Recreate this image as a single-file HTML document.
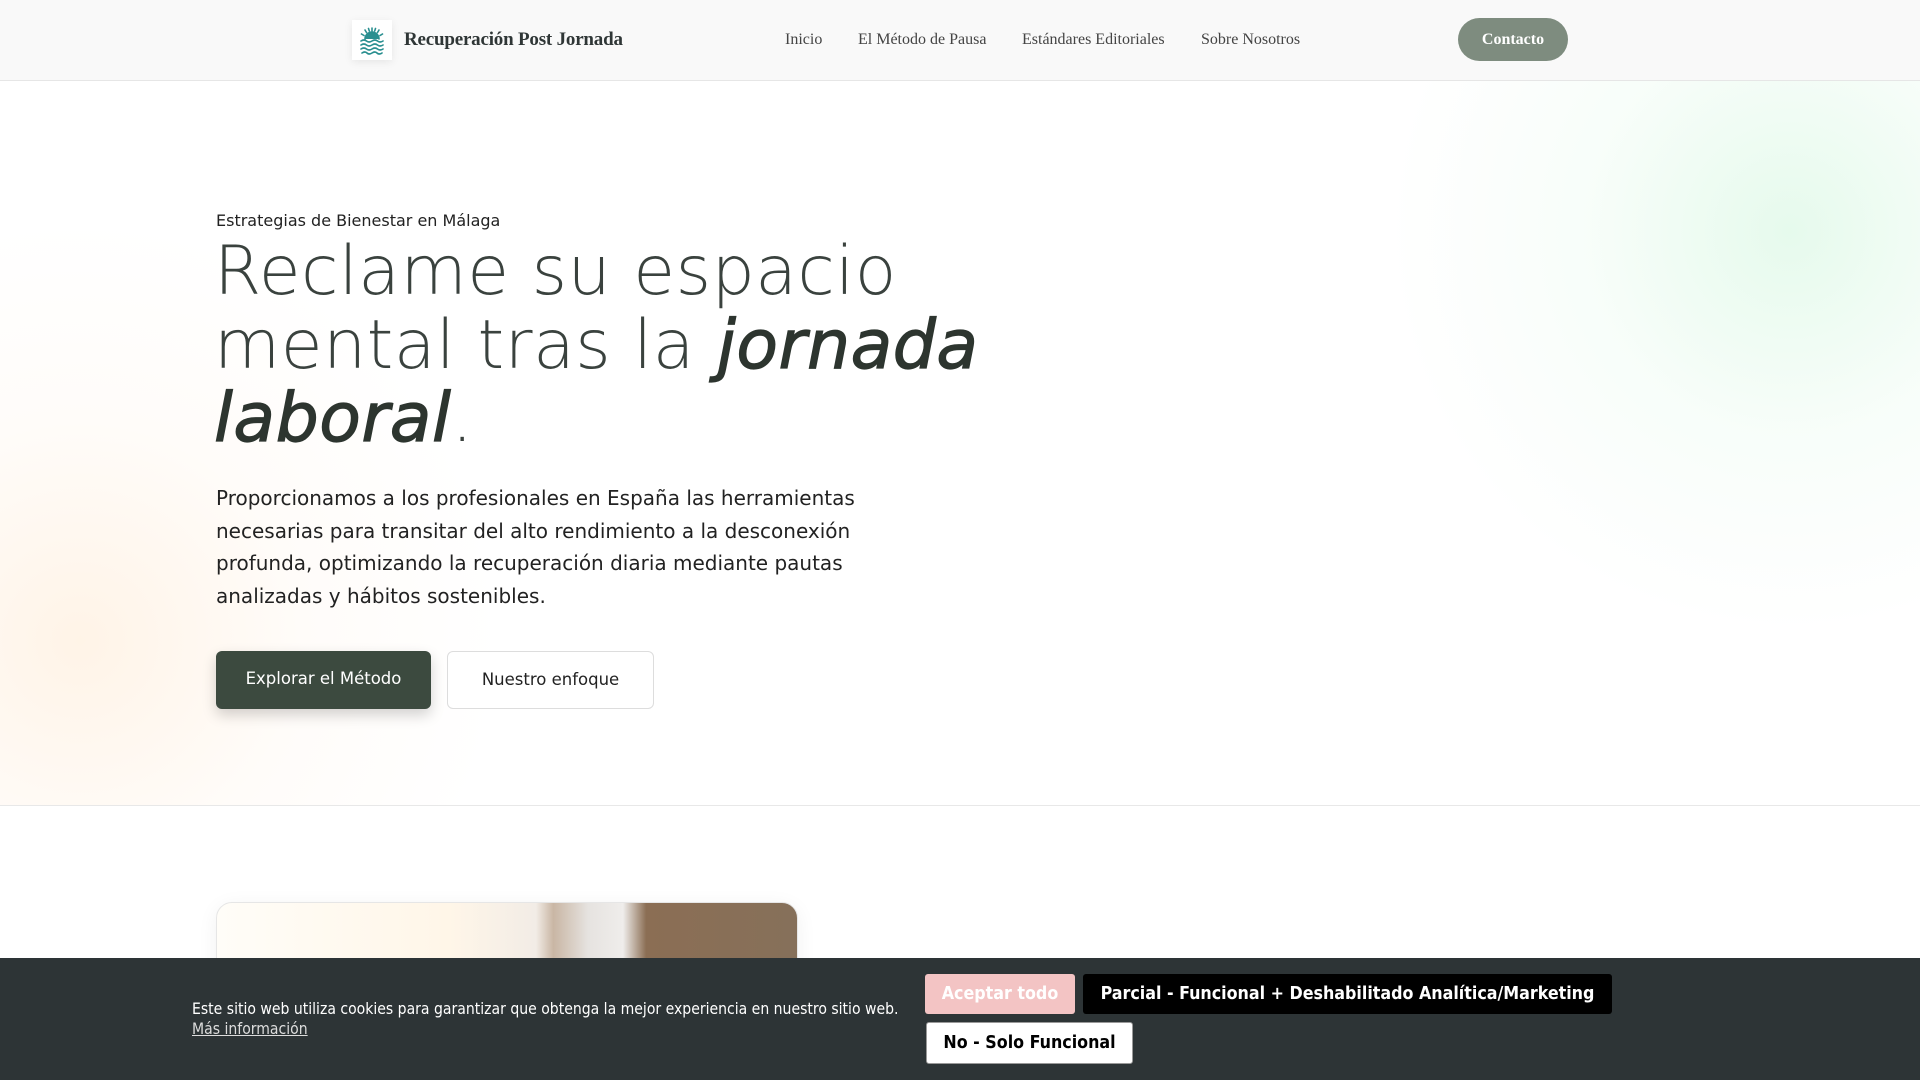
<!DOCTYPE html>
<html><head><meta charset="utf-8"><style>
*{box-sizing:border-box;margin:0;padding:0}
body{width:1920px;height:1080px;overflow:hidden;background:#fff;font-family:"DejaVu Sans","Liberation Sans",sans-serif;position:relative}
header{position:absolute;left:0;top:0;width:1920px;height:81px;background:#f9f9f9;border-bottom:1px solid #e6e6e6;z-index:3}
.logo{position:absolute;left:352px;top:20px;width:40px;height:40px;background:#fff;box-shadow:0 2px 8px rgba(0,0,0,.08)}
.brand{position:absolute;left:404px;top:29px;font:bold 19px "Liberation Serif",serif;color:#2f3636;letter-spacing:-.2px}
nav a{position:absolute;top:31px;font:16px "Liberation Serif",serif;color:#444;text-decoration:none}
.cta{position:absolute;left:1458px;top:18px;width:110px;height:43px;border-radius:22px;background:#7e8c7f;color:#fff;font:bold 16px "Liberation Serif",serif;text-align:center;line-height:43px}
.hero{position:absolute;top:81px;left:0;width:1920px;height:725px;border-bottom:1px solid #e8e8e8;overflow:hidden;
background:radial-gradient(circle at 1790px 150px,rgba(205,245,218,.5),rgba(230,250,236,.3) 200px,rgba(255,255,255,0) 400px),radial-gradient(circle at 80px 560px,rgba(255,236,215,.6),rgba(255,245,235,.3) 220px,rgba(255,255,255,0) 420px),#fff}
.eyebrow{position:absolute;left:216px;top:130px;font-size:16px;color:#222}
h1{position:absolute;left:214px;top:154px;font-weight:300;font-size:68px;line-height:73.5px;color:#3a423e;letter-spacing:.5px}
h1 em{font-weight:normal;color:#2d352f;-webkit-text-stroke:1.2px #2d352f}
.lead{position:absolute;left:216px;top:401px;width:700px;font-size:20px;line-height:32.7px;color:#222}
.b1{position:absolute;left:216px;top:570px;width:215px;height:58px;background:#3c4a3f;color:#fff;border-radius:6px;font-size:16.5px;text-align:center;line-height:56px;box-shadow:0 6px 14px rgba(0,0,0,.18)}
.b2{position:absolute;left:447px;top:570px;width:207px;height:58px;background:#fff;border:1px solid #ddd;color:#222;border-radius:6px;font-size:16.5px;text-align:center;line-height:56px}
.card{position:absolute;left:216px;top:902px;width:582px;height:178px;border-radius:16px 16px 0 0;overflow:hidden;border:1px solid #e6e6e6;box-shadow:0 4px 20px rgba(0,0,0,.06);
background:linear-gradient(90deg,#fffdf8 0%,#fff6e8 40%,#f2ece6 55%,#c9b6a4 58%,#e6e3e0 64%,#efedeb 70%,#8b6e54 74%,#86705a 100%)}
.cookie{position:absolute;left:0;top:958px;width:1920px;height:122px;background:#2d3436;z-index:4;font-family:"DejaVu Sans Condensed","DejaVu Sans",sans-serif;font-stretch:condensed}
.ct{position:absolute;left:192px;top:41px;color:#fff;font-size:15.6px;line-height:20px}
.ct u{color:#ddd}
.cb{position:absolute;font-weight:bold;font-size:17.7px;text-align:center;border-radius:3px}
</style></head><body>
<header>
<div class="logo"><svg width="40" height="40" viewBox="0 0 40 40"><g stroke="#2a8f90" stroke-width="1.6" fill="none" stroke-linecap="round">
<path d="M13 19a7 7 0 0 1 14 0" fill="#2a8f90"/><path d="M20 8v3M13 10l1.5 2.5M27 10l-1.5 2.5M9.5 14l2.5 1.5M30.5 14l-2.5 1.5M16.5 8.5l.8 2.5M23.5 8.5l-.8 2.5"/>
<path d="M9 21q3-2 5.5 0t5.5 0 5.5 0 5.5 0"/><path d="M9 25q3-2 5.5 0t5.5 0 5.5 0 5.5 0"/><path d="M9 29q3-2 5.5 0t5.5 0 5.5 0 5.5 0"/><path d="M10 33q3-2 5 0t5 0 5 0 5 0"/></g></svg></div>
<div class="brand">Recuperación Post Jornada</div>
<nav><a style="left:785px">Inicio</a><a style="left:858px">El Método de Pausa</a><a style="left:1022px">Estándares Editoriales</a><a style="left:1201px">Sobre Nosotros</a></nav>
<div class="cta">Contacto</div>
</header>
<div class="hero">
<div class="eyebrow">Estrategias de Bienestar en Málaga</div>
<h1>Reclame su espacio<br>mental tras la <em>jornada<br>laboral</em>.</h1>
<div class="lead">Proporcionamos a los profesionales en España las herramientas necesarias para transitar del alto rendimiento a la desconexión profunda, optimizando la recuperación diaria mediante pautas analizadas y hábitos sostenibles.</div>
<div class="b1">Explorar el Método</div>
<div class="b2">Nuestro enfoque</div>
</div>
<div class="card"></div>
<div class="cookie">
<div class="ct">Este sitio web utiliza cookies para garantizar que obtenga la mejor experiencia en nuestro sitio web.<br><u>Más información</u></div>
<div class="cb" style="left:925px;top:16px;width:150px;height:40px;line-height:40px;background:#f3c4c4;color:#fff">Aceptar todo</div>
<div class="cb" style="left:1083px;top:16px;width:529px;height:40px;line-height:40px;background:#000;color:#fff">Parcial - Funcional + Deshabilitado Analítica/Marketing</div>
<div class="cb" style="left:926px;top:64px;width:207px;height:42px;line-height:40px;background:#fff;color:#000;border:1px solid #999">No - Solo Funcional</div>
</div>
</body></html>
